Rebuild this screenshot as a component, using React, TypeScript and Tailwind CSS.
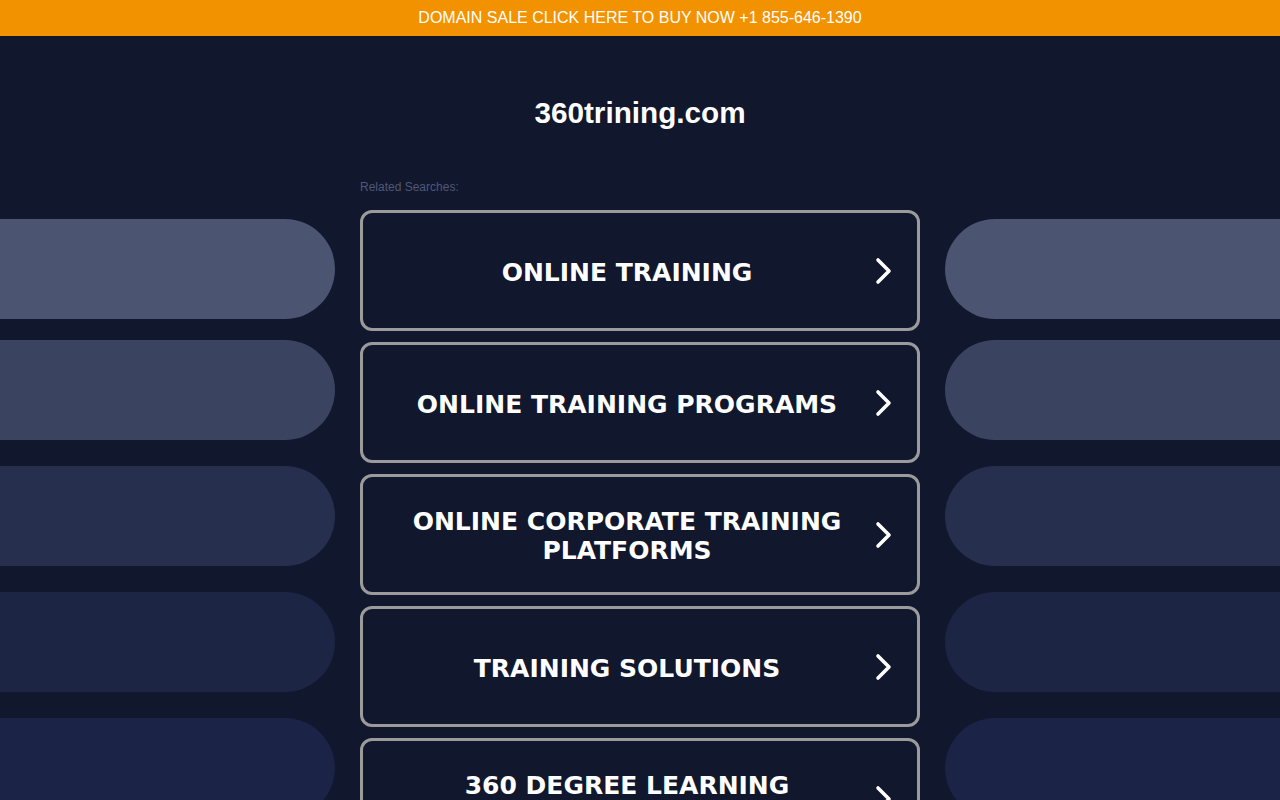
const searches = [
  'ONLINE TRAINING',
  'ONLINE TRAINING PROGRAMS',
  'ONLINE CORPORATE TRAINING PLATFORMS',
  'TRAINING SOLUTIONS',
  '360 DEGREE LEARNING MANAGEMENT',
]

const pills = [
  'mt-[9px] bg-[#4b5572]',
  'mt-[21px] bg-[#3a4360]',
  'mt-[26px] bg-[#262f4e]',
  'mt-[26px] bg-[#1d2545]',
  'mt-[26px] bg-[#1b2446]',
]

function Chevron() {
  return (
    <svg width="26" height="30" viewBox="0 0 26 30" fill="none">
      <polyline
        points="7,4 18,15 7,26"
        stroke="white"
        strokeWidth="3.6"
        strokeLinecap="round"
        strokeLinejoin="round"
      />
    </svg>
  )
}

function Pills({ side }: { side: 'left' | 'right' }) {
  return (
    <div className="flex flex-col">
      {pills.map((p, i) => (
        <div
          key={i}
          className={`h-[100px] shrink-0 ${p} ${side === 'left' ? 'rounded-r-full' : 'rounded-l-full'}`}
        />
      ))}
    </div>
  )
}

export default function App() {
  return (
    <div className="min-h-screen bg-[#11172c] font-['Liberation_Sans',Arial,sans-serif] text-white">
      <div className="flex h-9 items-center justify-center bg-[#f39200] text-base text-white">
        DOMAIN SALE CLICK HERE TO BUY NOW +1 855-646-1390
      </div>

      <div className="pt-[57px] text-center text-[29.7px] font-bold leading-[40px]">360trining.com</div>

      <div className="mx-auto mt-[46px] mb-[15px] w-[560px] text-xs leading-4 text-[#4f5878]">
        Related Searches:
      </div>

      <div className="grid grid-cols-[1fr_560px_1fr] gap-x-[25px]">
        <Pills side="left" />
        <div className="flex flex-col gap-[11px]">
          {searches.map((s) => (
            <div
              key={s}
              className="flex h-[121px] items-center rounded-[12px] border-[3px] border-[#9b9b9b] pl-5 pr-5"
            >
              <div className="flex-1 pt-[3px] text-center font-['DejaVu_Sans',Verdana,sans-serif] text-[25px] font-bold leading-[29px] text-white">
                {s}
              </div>
              <div className="flex w-[26px] justify-center">
                <Chevron />
              </div>
            </div>
          ))}
        </div>
        <Pills side="right" />
      </div>
    </div>
  )
}
